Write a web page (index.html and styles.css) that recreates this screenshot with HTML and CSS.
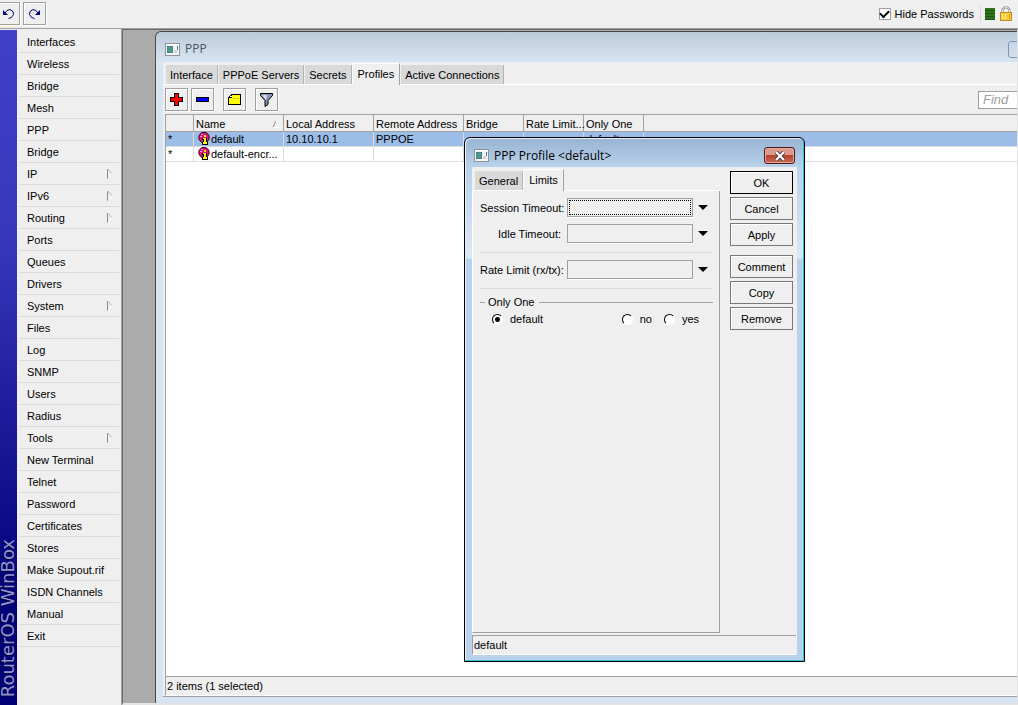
FILE: index.html
```html
<!DOCTYPE html>
<html lang="en">
<head>
  <meta charset="UTF-8">
  <meta name="viewport" content="width=device-width, initial-scale=1.0">
  <title>RouterOS WinBox</title>
  <link rel="stylesheet" href="styles.css">
</head>
<body>

  <svg class="defs" width="0" height="0" aria-hidden="true">
    <symbol id="arrow" viewBox="0 0 8 12">
      <path d="M1.5 1v10" stroke="#8c8c8c" fill="none"/>
      <path d="M1.500 1L6 5.500" stroke="#b4b4b4" fill="none"/>
      <path d="M6.500 5.500L2 10.500" stroke="#fff" fill="none"/>
    </symbol>
    <symbol id="app-icon" viewBox="0 0 15 13">
      <rect x=".5" y=".5" width="14" height="12" fill="#f4f4f4" stroke="#8d949c"/>
      <path d="M1 1h13v1H1z" fill="#fff"/>
      <path d="M2 3h6v7H2z" fill="#4a7fa0"/>
      <path d="M3 4h4v5H3z" fill="#4b9a80"/>
      <path d="M9 7h3v3H9z" fill="#d2d2d2"/>
      <path d="M12 3h1v4h-1z" fill="#3f7ea6"/>
    </symbol>
    <symbol id="profile" viewBox="0 0 12 13">
      <circle cx="6" cy="5.500" r="5.200" fill="#e0107c" stroke="#300018"/>
      <path d="M2 4h2v1H2zM3 2h2v1H3z" fill="#ff8cc4"/>
      <path d="M4 6h5v4h1v3H4v-3h1V8H4z" fill="#000"/>
      <path d="M6 3h2v2H6zM5 6h3v4h1v2H5v-2h1V7H5z" fill="#ff0"/>
    </symbol>
  </svg>

  <div class="app">
    <header class="topbar">
      <button class="tool" aria-label="Undo">
        <svg width="13" height="13" viewBox="0 0 13 13">
          <path d="M1 3v5h5z" fill="#000080"/>
          <path d="M3 6l2-2.500 3-1 3 2 .5 3-2 3-3 1" fill="none" stroke="#000080"/>
        </svg>
      </button>
      <button class="tool" aria-label="Redo">
        <svg width="13" height="13" viewBox="0 0 13 13">
          <path d="M12 3v5H7z" fill="#000080"/>
          <path d="M10 6L8 3.500l-3-1-3 2-.5 3 2 3 3 1" fill="none" stroke="#000080"/>
        </svg>
      </button>
      <label class="hide-passwords"><input type="checkbox" class="check" checked>Hide Passwords</label>
      <div class="indicators">
        <span class="load"></span>
        <svg width="12" height="15" viewBox="0 0 12 15">
          <path d="M2.500 7V3.500l2-2h3l2 2V7" fill="none" stroke="#8a8a8a" stroke-width="2"/>
          <path d="M2.500 7V3.500l2-2h3l2 2V7" fill="none" stroke="#ddd" stroke-width="1"/>
          <rect x=".5" y="6.500" width="11" height="8" fill="#fc3" stroke="#b5902a"/>
          <path d="M2 8h1v5H2zM5 8h1v5H5z" fill="#ffef9a"/>
          <path d="M9 8h1v5H9z" fill="#e89a10"/>
        </svg>
      </div>
    </header>

    <main class="main">
      <div class="brand"><span>RouterOS WinBox</span></div>

      <nav class="menu">
        <a href="#">Interfaces</a>
        <a href="#">Wireless</a>
        <a href="#">Bridge</a>
        <a href="#">Mesh</a>
        <a href="#">PPP</a>
        <a href="#">Bridge</a>
        <a href="#">IP<svg width="8" height="12"><use href="#arrow"/></svg></a>
        <a href="#">IPv6<svg width="8" height="12"><use href="#arrow"/></svg></a>
        <a href="#">Routing<svg width="8" height="12"><use href="#arrow"/></svg></a>
        <a href="#">Ports</a>
        <a href="#">Queues</a>
        <a href="#">Drivers</a>
        <a href="#">System<svg width="8" height="12"><use href="#arrow"/></svg></a>
        <a href="#">Files</a>
        <a href="#">Log</a>
        <a href="#">SNMP</a>
        <a href="#">Users</a>
        <a href="#">Radius</a>
        <a href="#">Tools<svg width="8" height="12"><use href="#arrow"/></svg></a>
        <a href="#">New Terminal</a>
        <a href="#">Telnet</a>
        <a href="#">Password</a>
        <a href="#">Certificates</a>
        <a href="#">Stores</a>
        <a href="#">Make Supout.rif</a>
        <a href="#">ISDN Channels</a>
        <a href="#">Manual</a>
        <a href="#">Exit</a>
      </nav>

      <div class="desktop">

        <section class="window">
          <div class="title">
            <svg width="15" height="13"><use href="#app-icon"/></svg>
            <h1>PPP</h1>
            <button class="win-btn" aria-label="Minimize"></button>
          </div>
          <div class="window-body">
            <div class="tabs">
              <button class="tab">Interface</button>
              <button class="tab">PPPoE Servers</button>
              <button class="tab">Secrets</button>
              <button class="tab active">Profiles</button>
              <button class="tab">Active Connections</button>
            </div>
            <div class="toolbar">
              <button class="tool" aria-label="Add">
                <svg width="13" height="13" viewBox="0 0 13 13" shape-rendering="crispEdges">
                  <path d="M4 0h5v4h4v5H9v4H4V9H0V4h4z" fill="#000"/>
                  <path d="M5 1h3v4h4v3H8v4H5V8H1V5h4z" fill="#f00"/>
                </svg>
              </button>
              <button class="tool" aria-label="Remove">
                <svg width="13" height="13" viewBox="0 0 13 13" shape-rendering="crispEdges">
                  <path d="M0 4h13v5H0z" fill="#000"/>
                  <path d="M1 5h11v3H1z" fill="#00f"/>
                </svg>
              </button>
              <button class="tool spaced" aria-label="Comment">
                <svg width="13" height="13" viewBox="0 0 13 13" shape-rendering="crispEdges">
                  <path d="M3 1h10v11H0V4h1V3h1V2h1z" fill="#000"/>
                  <path d="M4 2h8v9H1V5h3z" fill="#ff0"/>
                  <path d="M2 3h2v1H2z" fill="#fff"/>
                  <path d="M5 5h2v1H5zM8 5h3v1H8z" fill="#c8c800"/>
                </svg>
              </button>
              <button class="tool spaced" aria-label="Filter">
                <svg width="13" height="14" viewBox="0 0 13 14">
                  <path d="M.5.5h12v2L8 7.500v4l-3 2v-6L.5 2.500z" fill="#8a94b4" stroke="#000"/>
                  <path d="M2 2h5L6 7z" fill="#d4daea"/>
                </svg>
              </button>
              <input type="text" class="find" placeholder="Find" aria-label="Find">
            </div>
            <div class="grid">
              <table>
                <colgroup>
                  <col class="col-flag"><col class="col-wide"><col class="col-wide"><col class="col-wide">
                  <col class="col-short"><col class="col-short"><col class="col-short"><col>
                </colgroup>
                <thead>
                  <tr>
                    <th></th>
                    <th>
                      <div class="sorted">Name
                        <svg width="8" height="8" viewBox="0 0 8 8"><path d="M4 1L1 7" stroke="#8c8c8c"/><path d="M4.500 1L7 7.500H1" stroke="#fff" fill="none"/></svg>
                      </div>
                    </th>
                    <th>Local Address</th>
                    <th>Remote Address</th>
                    <th>Bridge</th>
                    <th>Rate Limit...</th>
                    <th>Only One</th>
                    <th></th>
                  </tr>
                </thead>
                <tbody>
                  <tr class="selected">
                    <td>*</td>
                    <td><div class="name"><svg width="12" height="13"><use href="#profile"/></svg>default</div></td>
                    <td>10.10.10.1</td>
                    <td>PPPOE</td>
                    <td></td>
                    <td></td>
                    <td>default</td>
                    <td></td>
                  </tr>
                  <tr>
                    <td>*</td>
                    <td><div class="name"><svg width="12" height="13"><use href="#profile"/></svg>default-encr...</div></td>
                    <td></td>
                    <td></td>
                    <td></td>
                    <td></td>
                    <td></td>
                    <td></td>
                  </tr>
                </tbody>
              </table>
            </div>
            <div class="status">2 items (1 selected)</div>
          </div>
        </section>

        <section class="dialog">
          <div class="title">
            <svg width="15" height="13"><use href="#app-icon"/></svg>
            <h2>PPP Profile &lt;default&gt;</h2>
            <button class="close" aria-label="Close">
              <svg width="12" height="10" viewBox="0 0 12 10">
                <path d="M2 1l8 8M10 1L2 9" stroke="#54403f" stroke-width="4"/>
                <path d="M2 1l8 8M10 1L2 9" stroke="#fff" stroke-width="2"/>
              </svg>
            </button>
          </div>
          <div class="dialog-body">
            <div class="dialog-main">
              <div class="pane">
                <div class="tabs">
                  <button class="tab">General</button>
                  <button class="tab active">Limits</button>
                </div>
                <form class="panel">
                  <div class="field">
                    <label for="session">Session Timeout:</label>
                    <input type="text" id="session" class="focused">
                    <button type="button" class="drop" aria-label="Session Timeout options"></button>
                  </div>
                  <div class="field">
                    <label for="idle">Idle Timeout:</label>
                    <input type="text" id="idle">
                    <button type="button" class="drop" aria-label="Idle Timeout options"></button>
                  </div>
                  <hr>
                  <div class="field">
                    <label for="rate">Rate Limit (rx/tx):</label>
                    <input type="text" id="rate">
                    <button type="button" class="drop" aria-label="Rate Limit options"></button>
                  </div>
                  <hr>
                  <fieldset>
                    <legend>Only One</legend>
                    <div class="radios">
                      <label class="first"><input type="radio" name="only" checked>default</label>
                      <label><input type="radio" name="only">no</label>
                      <label><input type="radio" name="only">yes</label>
                    </div>
                  </fieldset>
                </form>
              </div>
              <div class="actions">
                <button class="primary">OK</button>
                <button>Cancel</button>
                <button>Apply</button>
                <button class="group">Comment</button>
                <button>Copy</button>
                <button>Remove</button>
              </div>
            </div>
            <div class="status">default</div>
          </div>
        </section>

      </div>
    </main>
  </div>

</body>
</html>
```

FILE: styles.css
```css
* {
  margin: 0;
  padding: 0;
  box-sizing: border-box;
}

body,
button,
input {
  font-family: "Liberation Sans", Arial, sans-serif;
  font-size: 11px;
  line-height: 14px;
  color: #000;
}

body {
  background: #efefef;
}

button,
input {
  border-radius: 0;
  background: #efefef;
}

svg {
  display: block;
  flex: none;
}

.defs {
  position: absolute;
}

.app {
  height: 100vh;
  display: flex;
  flex-direction: column;
  overflow: hidden;
}

/* top bar */

.topbar {
  height: 29px;
  padding: 2px 6px 3px 0;
  margin-left: -3px;
  display: flex;
  align-items: center;
  gap: 3px;
  border-bottom: 1px solid #a0a0a0;
}

.tool {
  width: 23px;
  height: 23px;
  display: flex;
  align-items: center;
  justify-content: center;
  border: 1px solid #a0a0a0;
  box-shadow: inset 1px 1px #fff, 1px 1px #fff;
}

.hide-passwords {
  display: flex;
  align-items: center;
  gap: 4px;
  margin-left: auto;
}

.check {
  appearance: none;
  width: 12px;
  height: 12px;
  border: 1px solid #a0a0a0;
  background: #fff;
  display: flex;
  align-items: center;
  justify-content: center;
}

.check:checked::before {
  content: "";
  width: 7px;
  height: 4px;
  margin-bottom: 2px;
  border-left: 2px solid #000;
  border-bottom: 2px solid #000;
  transform: rotate(-45deg);
}

.indicators {
  display: flex;
  align-items: center;
  gap: 5px;
  height: 16px;
  margin-left: 3px;
  padding-left: 4px;
  border-left: 1px solid #d8d8d8;
}

.load {
  width: 10px;
  height: 12px;
  background: repeating-linear-gradient(#2f7418 0 2px, #1f5210 2px 3px);
}

/* main area */

.main {
  flex: 1;
  min-height: 0;
  display: flex;
}

.brand {
  width: 17px;
  margin-top: 1px;
  padding-bottom: 8px;
  display: flex;
  align-items: flex-end;
  background: linear-gradient(#4040c8, #3838bc 30%, #000078 85%);
}

.brand span {
  writing-mode: vertical-rl;
  transform: rotate(180deg);
  font-family: "DejaVu Sans", sans-serif;
  font-size: 18px;
  line-height: 15px;
  white-space: nowrap;
  color: #9494cc;
  text-shadow: -1px -1px #00003c;
}

.menu {
  width: 105px;
  padding: 2px 2px 0;
  border-right: 1px solid #a0a0a0;
}

.menu a {
  height: 22px;
  padding: 0 5px 0 8px;
  display: flex;
  align-items: center;
  justify-content: space-between;
  border-bottom: 1px solid #dadada;
  color: #000;
  text-decoration: none;
  white-space: nowrap;
}

.desktop {
  flex: 1;
  position: relative;
  overflow: hidden;
  background: #ababab;
  border: 1px solid #696969;
  border-right-color: #e3e3e3;
  border-bottom: 2px solid #e3e3e3;
}

/* windows */

.title {
  height: 30px;
  display: flex;
  align-items: center;
  gap: 5px;
}

.title h1,
.title h2 {
  font-family: "Open Sans", "Noto Sans", sans-serif;
  font-size: 12px;
  font-weight: normal;
  line-height: 16px;
}

.window {
  position: absolute;
  left: 32px;
  top: 1px;
  right: -90px;
  bottom: 0;
  display: flex;
  flex-direction: column;
  padding: 0 7px 6px;
  border: 1px solid #484848;
  border-bottom: 0;
  border-radius: 6px 6px 0 0;
  background: linear-gradient(#bccbda, #d7e4f2 30px);
}

.window .title h1 {
  color: #4c5560;
}

.window .title {
  padding: 4px 0 0 2px;
}

.win-btn {
  width: 91px;
  height: 17px;
  margin-left: auto;
  border: 1px solid #8494b0;
  border-radius: 3px;
  background: linear-gradient(#c6d5e6, #d3e0ee);
}

.window-body {
  flex: 1;
  min-height: 0;
  display: flex;
  flex-direction: column;
  background: #efefef;
  padding-left: 2px;
  border-bottom: 1px solid #a0a0a0;
}

.tabs {
  height: 23px;
  display: flex;
  align-items: flex-end;
  border-bottom: 1px solid #fff;
}

.tab {
  height: 19px;
  padding: 0 4px;
  border: 0;
  border-right: 1px solid #b4b4b4;
  background: #d9d9d9;
  margin-left: 1px;
  white-space: nowrap;
}

.tab.active {
  height: 22px;
  margin-bottom: -1px;
  margin-left: 0;
  padding: 0 5px 2px;
  border-top: 1px solid #fff;
  border-left: 1px solid #fff;
  border-right: 1px solid #a0a0a0;
  background: #efefef;
}

.toolbar {
  height: 29px;
  display: flex;
  align-items: center;
  gap: 3px;
}

.toolbar .spaced {
  margin-left: 6px;
}

.find {
  width: 121px;
  height: 18px;
  margin-left: auto;
  padding: 0 4px;
  border: 1px solid #a0a0a0;
  background: #fff;
  font-size: 13px;
  font-style: italic;
}

.find::placeholder {
  color: #a0a0a0;
}

.grid {
  flex: 1;
  min-height: 0;
  border-top: 1px solid #a0a0a0;
  border-left: 1px solid #a0a0a0;
  background: #fff;
}

table {
  width: 100%;
  table-layout: fixed;
  border-collapse: separate;
  border-spacing: 0;
}

.col-flag {
  width: 28px;
}

.col-wide {
  width: 90px;
}

.col-short {
  width: 60px;
}

th {
  height: 17px;
  padding: 2px 0 0 2px;
  background: #efefef;
  border-right: 1px solid #a0a0a0;
  border-bottom: 1px solid #a0a0a0;
  font-weight: normal;
  text-align: left;
  white-space: nowrap;
}

td {
  height: 15px;
  padding: 0 2px;
  border-right: 1px solid #dcdcdc;
  border-bottom: 1px solid #dcdcdc;
  white-space: nowrap;
}

.selected td {
  background: #9cbde8;
}

.sorted {
  display: flex;
  align-items: center;
  justify-content: space-between;
  padding-right: 3px;
}

.name {
  display: flex;
  gap: 1px;
  padding-left: 2px;
}

.status {
  height: 20px;
  padding: 2px 1px;
  border-top: 1px solid #a0a0a0;
  border-left: 1px solid #a0a0a0;
  border-bottom: 1px solid #fff;
}

/* profile dialog */

.dialog {
  position: absolute;
  left: 341px;
  top: 107px;
  width: 341px;
  height: 525px;
  display: flex;
  flex-direction: column;
  padding: 0 7px 6px;
  border: 1px solid #000;
  border-radius: 6px 6px 0 0;
  box-shadow: inset -1px -1px #2fc4dc, inset 1px 1px #e6f0fa;
  background: linear-gradient(#98b4d2, #b9d1ea 29px, #dce8f5 120px, #b9d1ea 121px);
}

.dialog .title {
  height: 29px;
  padding: 6px 2px 0;
}

.close {
  width: 31px;
  height: 17px;
  margin-left: auto;
  display: flex;
  align-items: center;
  justify-content: center;
  border: 1px solid #4e1a1e;
  border-radius: 3px;
  box-shadow: inset 0 0 0 1px #e4a89e;
  background: linear-gradient(#dc9a8c 50%, #b5412c 50%, #cc6a50);
}

.dialog-body {
  flex: 1;
  min-height: 0;
  display: flex;
  flex-direction: column;
  gap: 2px;
  padding-right: 1px;
  background: #efefef;
}

.dialog-main {
  flex: 1;
  min-height: 0;
  display: flex;
  gap: 10px;
}

.pane {
  flex: 1;
  min-width: 0;
  display: flex;
  flex-direction: column;
}

.pane .tabs {
  height: 24px;
  padding-left: 2px;
}

.panel {
  flex: 1;
  padding: 7px 7px 0;
  border-left: 1px solid #fff;
  border-right: 1px solid #a0a0a0;
  border-bottom: 1px solid #a0a0a0;
}

.field {
  display: flex;
  align-items: center;
  margin-bottom: 7px;
}

.field label {
  width: 81px;
  margin-right: 6px;
  text-align: right;
  white-space: nowrap;
}

.field input {
  flex: 1;
  min-width: 0;
  height: 19px;
  padding: 0 3px;
  border: 1px solid #a0a0a0;
  box-shadow: 1px 1px #fff;
}

.field .focused {
  outline: 1px dotted #000;
  outline-offset: -3px;
}

.drop {
  width: 19px;
  height: 19px;
  display: flex;
  align-items: center;
  justify-content: center;
  border: 0;
}

.drop::before {
  content: "";
  border: 5px solid transparent;
  border-top-color: #000;
  border-bottom: 0;
}

hr {
  margin: 9px 0 7px;
  border: 0;
  border-top: 1px solid #d8d8d8;
}

fieldset {
  border: 0;
  border-top: 1px solid #a0a0a0;
  margin: -1px -1px 0 0;
}

legend {
  margin-left: 5px;
  padding: 0 5px 0 3px;
}

.radios {
  display: flex;
  gap: 12px;
  padding: 3px 14px 0 12px;
}

.radios label {
  display: flex;
  align-items: center;
  gap: 7px;
}

.radios .first {
  margin-right: auto;
}

.radios input {
  appearance: none;
  width: 11px;
  height: 11px;
  border: 1px solid #000;
  border-right-color: #fff;
  border-bottom-color: #fff;
  border-radius: 50%;
  background: #fff;
}

.radios input:checked {
  background: radial-gradient(#000 2px, #fff 3px);
}

.actions {
  flex: none;
  width: 63px;
  margin: 4px 3px 0 0;
  display: flex;
  flex-direction: column;
  gap: 3px;
}

.actions button {
  height: 23px;
  border: 1px solid #787878;
  box-shadow: inset 1px 1px #fff;
}

.actions .primary {
  border-color: #000;
}

.actions .group {
  margin-top: 6px;
}
```
